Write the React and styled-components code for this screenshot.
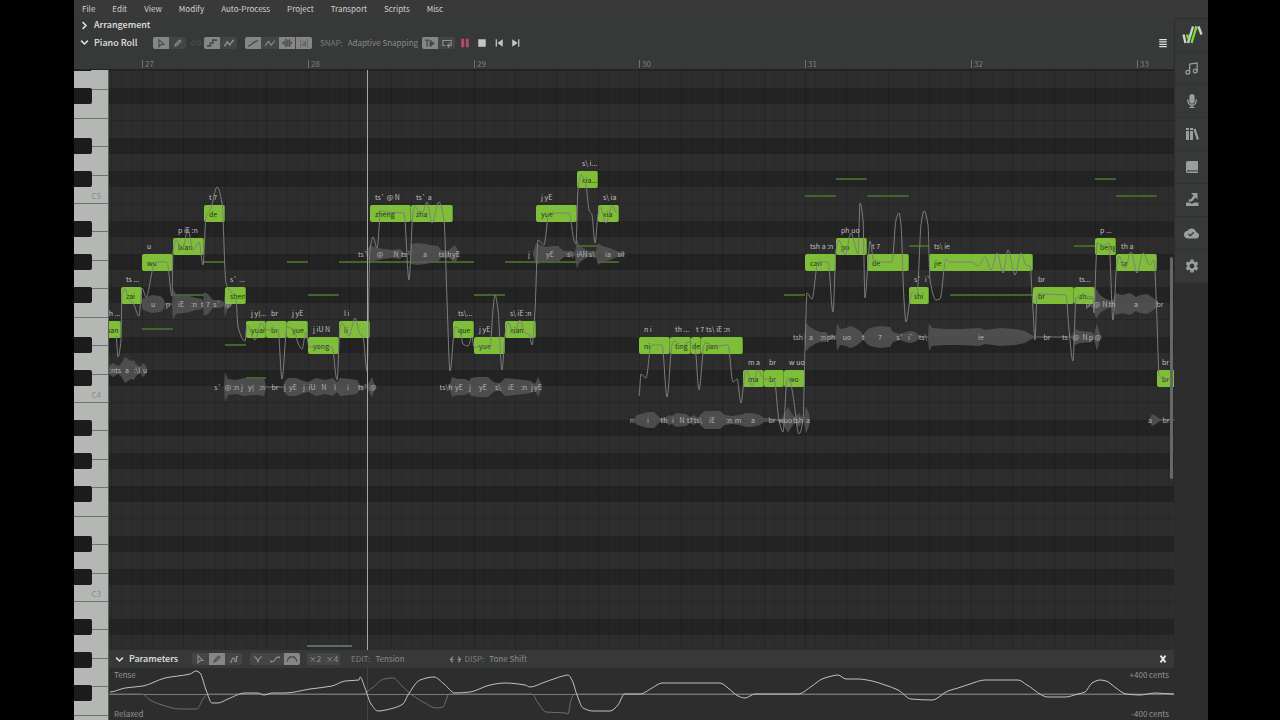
import React, { useState } from 'react';
import styled, { createGlobalStyle } from 'styled-components';
import { Music } from 'lucide-react';
import { FaMicrophone } from 'react-icons/fa';
import { MdSettings, MdCloudDone } from 'react-icons/md';

const GlobalStyle = createGlobalStyle`
* {
box-sizing: border-box;
}
body {
margin: 0;
background: #000;
color: #c4c6c4;
font-family: "Noto Sans CJK SC", "Noto Sans", sans-serif;
font-size: 8px;
line-height: 12px;
}
button, select {
margin: 0;
padding: 0;
border: 0;
background: none;
color: inherit;
font: inherit;
}
`;

// one sixteenth of a beat group on the time line, and one octave of keys
const STEP = 10.36;
const OCTAVE = 199;
const BAR_ONE = 33;
const MIDDLE_C = 333;

const timeX = (t) => Math.round(BAR_ONE + t * STEP);
const pitchY = (p) => Math.round(MIDDLE_C + 0.5 - ((p + 1) * OCTAVE) / 12);

const Page = styled.div`
height: 100vh;
min-height: 480px;
padding: 0 72px 0 74px;
display: flex;
`;

const Window = styled.div`
flex: 1;
min-width: 0;
display: flex;
flex-direction: column;
background: #2d2d2d;
overflow: hidden;
`;

const MenuBar = styled.nav`
height: 18px;
padding: 0 8px;
display: flex;
align-items: center;
gap: 17px;
background: #393939;
`;

const MenuItem = styled.button`
color: #d0d2d0;
`;

const Body = styled.div`
flex: 1;
min-height: 0;
display: flex;
`;

const Main = styled.main`
flex: 1;
min-width: 0;
display: flex;
flex-direction: column;
`;

const SectionBar = styled.div`
height: ${(p) => p.$height}px;
padding: 0 3px 0 6px;
display: flex;
align-items: center;
background: #373938;
`;

const SectionTitle = styled.button`
width: ${(p) => p.$width}px;
display: flex;
align-items: center;
gap: 5px;
color: #e0e2e0;
font-size: 9px;
font-weight: 500;
white-space: nowrap;
text-align: left;
`;

const Group = styled.div`
display: flex;
gap: 1px;
height: 12px;
margin-right: ${(p) => p.$after}px;
border-radius: 2px;
overflow: hidden;
background: #444645;
`;

const Tool = styled.button`
width: 16px;
height: 12px;
display: flex;
align-items: center;
justify-content: center;
background: ${(p) => (p.$on ? '#858786' : 'transparent')};
color: ${(p) => (p.$on ? '#464846' : '#8e908e')};
`;

const PlainTool = styled.button`
width: 17px;
height: 12px;
display: flex;
align-items: center;
justify-content: center;
color: ${(p) => p.$color || '#c4c6c4'};
`;

const Field = styled.label`
display: flex;
align-items: center;
gap: 5px;
color: #7c7e7c;
margin-right: ${(p) => p.$after}px;
`;

const Select = styled.select`
appearance: none;
width: 72px;
color: #8a8c8a;
`;

const Spacer = styled.div`
flex: 1;
`;

const Ruler = styled.div`
height: 17px;
padding: 7px 0 1px 68px;
display: flex;
overflow: hidden;
background: #373938;
border-bottom: 1px solid #222423;
`;

const Bar = styled.div`
flex: none;
padding-left: 2px;
border-left: 1px solid #6f716f;
color: #7c7e7c;
line-height: 8px;
`;

const Workspace = styled.div`
flex: 1;
min-height: 0;
display: flex;
`;

const Keys = styled.div`
flex: none;
width: 35px;
overflow: hidden;
border-right: 1px solid #5c5e5c;
`;

const Octave = styled.div`
position: relative;
height: ${OCTAVE}px;
display: flex;
flex-direction: column;

&:first-child {
margin-top: -65px;
}
`;

const WhiteKey = styled.div`
flex: 1;
padding: 0 7px 1px 0;
display: flex;
align-items: flex-end;
justify-content: flex-end;
background: #b5b7b5;
border-bottom: 1px solid #707270;
color: #8a8c8a;
`;

const BlackKey = styled.div`
position: absolute;
left: 0;
width: 18px;
height: 16px;
border-radius: 0 2px 2px 0;
background: #1c1c1c;
`;

const Editor = styled.div`
flex: 1;
min-width: 0;
display: flex;
flex-direction: column;
`;

const Roll = styled.section`
position: relative;
flex: 1;
min-height: 0;
overflow: hidden;
background-color: #2d2d2d;
background-image: linear-gradient(
#2d2d2d 0 17px, #232323 17px 33px,
#2d2d2d 33px 50px, #232323 50px 66px,
#2d2d2d 66px 83px, #232323 83px 99px,
#2d2d2d 99px 115px, #262626 115px 116px, #2d2d2d 116px 133px,
#232323 133px 149px, #2d2d2d 149px 166px,
#232323 166px 182px, #2d2d2d 182px 198px, #262626 198px 199px
);
background-size: 100% ${OCTAVE}px;
background-position: 0 -65px;
`;

const Layer = styled.svg`
position: absolute;
inset: 0;
width: 100%;
height: 100%;
pointer-events: none;
`;

const Note = styled.button`
position: absolute;
height: 17px;
padding-left: ${(p) => (p.$short ? 1 : 5)}px;
border-radius: 2px;
border-right: 1px solid #5f9a28;
background: #7fbe39;
color: #1c3808;
font-size: 7px;
text-align: left;
white-space: nowrap;
overflow: hidden;
`;

const Phoneme = styled.span`
position: absolute;
color: #c0c2c0;
font-size: 7px;
white-space: pre;
`;

const WaveText = styled.span`
position: absolute;
transform: translateX(-50%);
color: #b4b6b4;
font-size: 7px;
white-space: nowrap;
`;

const Alternate = styled.div`
position: absolute;
height: 2px;
background: #42662a;
`;

const Playhead = styled.div`
position: absolute;
top: 0;
bottom: 0;
left: 258px;
width: 1px;
background: ${(p) => (p.$dim ? '#424442' : '#a6a8a6')};
`;

const VerticalThumb = styled.div`
position: absolute;
right: 1px;
top: 187px;
width: 3px;
height: 222px;
border-radius: 2px;
background: #666866;
`;

const HorizontalThumb = styled.div`
position: absolute;
left: 198px;
bottom: 3px;
width: 45px;
height: 2px;
background: #5c6e5c;
`;

const Params = styled.section`
position: relative;
height: 52px;
padding: 1px 5px 0;
display: flex;
flex-direction: column;
justify-content: space-between;
overflow: hidden;
background: #2d2d2d;
`;

const ScaleRow = styled.div`
display: flex;
justify-content: space-between;
color: #929492;
`;

const Side = styled.aside`
flex: none;
width: 34px;
padding-top: 1px;
border-left: 1px solid #2b2d2c;
`;

const SideButton = styled.button`
width: 100%;
height: 33px;
display: flex;
align-items: center;
justify-content: center;
background: #373938;
border-bottom: 1px solid #313332;
color: #9c9e9c;
`;

const menus = ['File', 'Edit', 'View', 'Modify', 'Auto-Process', 'Project', 'Transport', 'Scripts', 'Misc'];

// lyric, start, length, semitones over C4, phonemes
const notes = [
  ['uan', -4, 2, 4, 'th ...'],
  ['zai', -2, 2, 6, 'ts ...'],
  ['wu', 0, 3, 8, 'u'],
  ['bian', 3, 3, 9, 'p iE :n'],
  ['de', 6, 2, 11, 't 7'],
  ['shen', 8, 2, 6, 's` ...'],
  ['yuan', 10, 2, 4, 'j y{...'],
  ['br', 12, 2, 4, 'br'],
  ['yue', 14, 2, 4, 'j yE'],
  ['yong', 16, 3, 3, 'j iU N'],
  ['li', 19, 3, 4, 'l i'],
  ['zheng', 22, 4, 11, 'ts` @ N'],
  ['zha', 26, 4, 11, 'ts` a'],
  ['que', 30, 2, 4, 'ts\\...'],
  ['yue', 32, 3, 3, 'j yE'],
  ['xian', 35, 3, 4, 's\\ iE :n'],
  ['yue', 38, 4, 11, 'j yE'],
  ['xia...', 42, 2, 13, 's\\ i...'],
  ['xia', 44, 2, 11, 's\\ ia'],
  ['ni', 48, 3, 3, 'n i'],
  ['ting', 51, 2, 3, 'th ...'],
  ['de', 53, 1, 3, 't 7'],
  ['jian', 54, 4, 3, 'ts\\ iE :n'],
  ['ma', 58, 2, 1, 'm a'],
  ['br', 60, 2, 1, 'br'],
  ['wo', 62, 2, 1, 'w uo'],
  ['can', 64, 3, 8, 'tsh a :n'],
  ['po', 67, 3, 9, 'ph uo'],
  ['de', 70, 4, 8, 't 7'],
  ['shi', 74, 2, 6, 's`  i`'],
  ['jie', 76, 10, 8, 'ts\\ ie'],
  ['br', 86, 4, 6, 'br'],
  ['zh...', 90, 2, 6, 'ts...'],
  ['beng', 92, 2, 9, 'p ...'],
  ['ta', 94, 4, 8, 'th a'],
  ['br', 98, 4, 1, 'br'],
];

// start, length, semitones over C4
const alternates = [
  [0, 3, 4], [3, 3, 6], [6, 2, 8], [8, 2, 3], [10, 2, 1], [14, 2, 8],
  [16, 3, 6], [19, 3, 8], [22, 10, 8], [32, 3, 6], [35, 7, 8], [42, 2, 9],
  [44, 2, 8], [62, 2, 6], [64, 3, 12], [67, 3, 13], [70, 4, 12], [74, 2, 9],
  [78, 8, 6], [90, 2, 9], [92, 2, 13], [94, 4, 12],
];

// y, envelope as x and half height, phonemes as centre x and text
const waves = [
  {
    y: 304,
    env: [142, 5, 146, 7, 152, 9, 160, 8, 163, 6, 165, 1, 172, 1, 173, 16, 176, 10, 184, 9, 190, 8, 196, 6, 202, 5, 203, 2, 204, 12, 208, 10, 213, 4, 220, 4, 224, 2, 225, 14, 227, 6, 232, 1],
    text: [153, 'u', 168, 'p', 181, 'iE', 194, ':n', 202, 't', 208, '7', 217, 's`', 228, '@'],
  },
  {
    y: 370,
    env: [109, 4, 113, 7, 118, 4, 120, 5, 122, 8, 125, 13, 131, 9, 134, 10, 136, 6, 140, 3, 143, 7, 146, 4, 147, 0],
    text: [115, ':nts', 127, 'a', 137, ':\\l', 145, 'u'],
  },
  {
    y: 387,
    env: [224, 1, 225, 15, 228, 8, 236, 7, 240, 8, 244, 9, 252, 8, 258, 8, 264, 9, 266, 1, 283, 1, 285, 6, 288, 9, 296, 9, 304, 6, 308, 5, 316, 9, 325, 7, 333, 9, 337, 5, 340, 9, 350, 8, 357, 7, 360, 2, 366, 1, 368, 3, 372, 10, 374, 4, 376, 1],
    text: [218, 's`', 228, '@', 236, ':n', 242, 'j', 251, 'y{', 262, ':n', 275, 'br', 285, 'j', 293, 'yE', 304, 'j', 312, 'iU', 324, 'N', 335, 'l', 348, 'i', 363, 'ts`', 373, '@'],
  },
  {
    y: 254,
    env: [366, 2, 370, 9, 374, 7, 384, 5, 392, 4, 400, 5, 402, 3, 404, 1, 410, 1, 411, 10, 417, 11, 426, 10, 430, 9, 438, 8, 441, 4, 448, 3, 450, 5, 455, 9, 457, 5, 460, 0],
    text: [363, 'ts`', 380, '@', 396, 'N', 406, 'ts`', 425, 'a', 445, 'ts\\h', 456, 'yE'],
  },
  {
    y: 387,
    env: [448, 1, 450, 3, 452, 10, 458, 8, 465, 8, 469, 6, 471, 9, 478, 10, 488, 10, 492, 6, 496, 4, 500, 4, 504, 8, 505, 9, 514, 8, 524, 7, 531, 6, 535, 3, 538, 10, 540, 6, 542, 1],
    text: [446, 'ts\\h', 459, 'yE', 470, 'j', 483, 'yE', 498, 's\\', 511, 'iE', 524, ':n', 532, 'j', 538, 'yE'],
  },
  {
    y: 254,
    env: [533, 1, 536, 11, 540, 9, 546, 7, 553, 8, 558, 8, 564, 3, 570, 3, 575, 2, 577, 15, 579, 9, 583, 6, 588, 3, 596, 3, 598, 11, 602, 8, 610, 6, 617, 3, 625, 1],
    text: [529, 'j', 550, 'yE', 570, 's\\', 582, 'iAN', 592, 's\\', 608, 'ia', 621, 'sil'],
  },
  {
    y: 420,
    env: [634, 1, 637, 5, 641, 6, 648, 8, 654, 8, 660, 2, 666, 3, 669, 5, 672, 4, 676, 7, 686, 6, 690, 3, 694, 5, 698, 2, 701, 6, 705, 9, 712, 9, 720, 9, 725, 5, 732, 4, 740, 5, 746, 7, 752, 7, 760, 5, 764, 2, 781, 1, 784, 6, 788, 13, 792, 6, 795, 3, 799, 7, 801, 4, 804, 2, 806, 14, 809, 6, 810, 0],
    text: [632, 'n', 648, 'i', 664, 'th', 673, 'i', 682, 'N', 690, 't7', 698, 'ts\\', 712, 'iE', 729, ':n', 738, 'm', 753, 'a', 772, 'br', 781, 'w', 788, 'uo', 798, 'tsh', 808, 'a'],
  },
  {
    y: 337,
    env: [804, 1, 806, 14, 810, 10, 815, 7, 820, 5, 826, 5, 828, 2, 836, 2, 837, 14, 840, 8, 846, 9, 850, 11, 856, 9, 861, 5, 863, 2, 867, 7, 870, 9, 880, 11, 890, 10, 893, 5, 900, 3, 906, 5, 910, 6, 915, 5, 920, 1, 928, 1, 929, 14, 932, 9, 945, 8, 960, 8, 980, 9, 985, 7, 1000, 9, 1015, 8, 1025, 6, 1030, 3, 1034, 1, 1072, 1, 1075, 8, 1080, 6, 1092, 5, 1094, 2, 1097, 14, 1099, 6, 1101, 0],
    text: [798, 'tsh', 811, 'a', 823, ':n', 831, 'ph', 847, 'uo', 863, 't', 880, '7', 900, 's`', 911, 'i`', 923, 'ts\\', 981, 'ie', 1047, 'br', 1067, 'ts`', 1076, '@', 1085, 'N', 1091, 'p', 1098, '@'],
  },
  {
    y: 304,
    env: [1088, 1, 1093, 4, 1096, 15, 1100, 9, 1106, 5, 1112, 3, 1116, 11, 1122, 9, 1130, 11, 1136, 7, 1140, 9, 1147, 10, 1152, 7, 1157, 3, 1158, 1],
    text: [1088, 'p', 1097, '@', 1105, 'N', 1112, 'th', 1136, 'a', 1160, 'br'],
  },
  {
    y: 420,
    env: [1150, 2, 1152, 6, 1156, 4, 1160, 1, 1174, 1],
    text: [1150, 'a', 1166, 'br'],
  },
];

const pitchCurves = [
  [116, 336, 118, 357, 121, 340, 122, 293, 125, 289, 129, 300, 133, 303, 139, 316, 142, 288, 146, 297, 154, 265, 157, 262, 167, 262, 172, 296, 173, 252, 176, 240, 182, 250, 188, 230, 193, 250, 199, 242, 203, 265, 206, 217, 211, 208, 217, 187, 222, 203, 226, 283, 231, 292, 236, 300, 238, 327, 245, 341, 247, 325, 255, 340, 261, 323, 266, 330, 278, 330, 282, 379, 287, 327, 294, 330, 298, 343, 302, 349, 306, 332, 309, 347, 332, 347, 337, 380, 340, 327, 342, 323, 349, 336, 355, 318, 360, 334, 363, 337, 367, 371, 370, 250, 373, 237, 377, 248, 381, 210, 384, 212, 404, 213, 409, 280, 413, 212, 415, 206, 421, 217, 427, 202, 432, 223, 439, 202, 444, 220, 447, 300, 450, 371, 455, 327, 460, 330, 463, 344, 468, 346, 472, 337, 474, 347, 490, 347, 493, 310, 495, 295, 498, 310, 502, 370, 505, 335, 508, 322, 514, 334, 520, 320, 525, 333, 529, 334, 532, 345, 535, 310, 538, 240, 544, 245, 549, 213, 569, 213, 574, 240, 576, 244, 578, 190, 581, 175, 586, 185, 589, 210, 592, 215, 595, 243, 598, 215, 600, 207, 606, 223, 612, 206, 617, 213],
  [639, 396, 641, 374, 646, 378, 651, 346, 653, 345, 662, 345, 667, 397, 672, 345, 674, 341, 681, 347, 689, 342, 695, 348, 699, 390, 704, 345, 706, 342, 712, 347, 728, 345, 733, 382, 737, 379, 741, 403, 745, 374, 747, 371, 752, 386, 758, 370, 764, 379, 774, 379, 779, 420, 783, 432, 787, 380, 789, 378, 793, 395, 799, 434, 803, 420, 805, 350, 807, 293, 812, 299, 818, 262, 828, 262, 833, 312, 836, 250, 839, 240, 845, 255, 851, 233, 858, 254, 860, 203, 863, 220, 865, 298, 868, 262, 870, 241, 874, 262, 892, 262, 896, 220, 899, 213, 901, 225, 904, 300, 906, 322, 910, 300, 912, 292, 917, 296, 921, 225, 924, 211, 928, 225, 930, 280, 936, 300, 940, 299, 946, 259, 950, 262, 972, 262, 978, 266, 985, 257, 991, 270, 997, 253, 1003, 273, 1008, 250, 1015, 275, 1021, 253, 1026, 265, 1030, 266, 1033, 310, 1035, 340, 1037, 296, 1040, 294, 1066, 295, 1069, 330, 1073, 361, 1076, 298, 1083, 296, 1093, 297, 1094, 313, 1096, 262, 1097, 243, 1102, 246, 1109, 243, 1113, 320, 1117, 262, 1119, 256, 1125, 268, 1131, 252, 1137, 273, 1143, 253, 1150, 265, 1154, 260, 1157, 320, 1159, 375, 1163, 379, 1174, 379],
];

const tension = [110, 692, 125, 688, 143, 686, 165, 678, 190, 674, 196, 671, 200, 673, 206, 690, 212, 703, 218, 703, 228, 699, 245, 693, 258, 693, 264, 695, 272, 693, 285, 693, 310, 689, 332, 686, 345, 681, 359, 680, 360, 677, 365, 688, 371, 704, 378, 711, 390, 709, 403, 704, 408, 695, 420, 680, 434, 677, 444, 684, 455, 693, 470, 692, 490, 685, 505, 683, 525, 685, 530, 687, 545, 682, 563, 676, 568, 675, 572, 680, 577, 695, 583, 708, 593, 711, 610, 711, 618, 705, 622, 697, 624, 694, 640, 694, 652, 688, 662, 683, 720, 683, 728, 688, 738, 696, 745, 698, 755, 694, 798, 694, 812, 686, 822, 679, 832, 676, 838, 675, 846, 679, 858, 679, 872, 681, 885, 685, 898, 690, 911, 699, 932, 700, 948, 691, 958, 688, 970, 684, 985, 680, 1018, 680, 1027, 685, 1048, 697, 1065, 697, 1078, 694, 1085, 692, 1092, 683, 1100, 680, 1106, 681, 1116, 688, 1126, 694, 1140, 695, 1155, 693, 1174, 694];
const toneShift = [110, 694, 142, 694, 150, 700, 162, 705, 180, 709, 197, 709, 203, 699, 208, 694, 362, 694, 372, 688, 384, 679, 393, 678, 402, 686, 412, 695, 425, 703, 436, 708, 443, 707, 449, 694, 532, 694, 538, 703, 546, 712, 566, 713, 568, 714, 571, 700, 575, 694, 1174, 694];

const pairs = (flat) => {
  const out = [];
  for (let i = 0; i < flat.length; i += 2) out.push([flat[i], flat[i + 1]]);
  return out;
};

// cubic through all the points, flat at the peaks
const smooth = (flat) => {
  const pts = pairs(flat);
  const slope = pts.map((p, i) => {
    const a = pts[i - 1];
    const b = pts[i + 1];
    if (!a || !b) return 0;
    const left = (p[1] - a[1]) / (p[0] - a[0]);
    const right = (b[1] - p[1]) / (b[0] - p[0]);
    return left * right <= 0 ? 0 : (2 * left * right) / (left + right);
  });
  let d = `M${pts[0]}`;
  for (let i = 1; i < pts.length; i++) {
    const [x0, y0] = pts[i - 1];
    const [x1, y1] = pts[i];
    const h = (x1 - x0) / 3;
    d += `C${x0 + h},${y0 + slope[i - 1] * h} ${x1 - h},${y1 - slope[i] * h} ${x1},${y1}`;
  }
  return d;
};

const envelope = ({ y, env }) => {
  const pts = pairs(env);
  const top = pts.map(([x, h]) => `${x},${y - h}`);
  const bottom = pts.map(([x, h]) => `${x},${y + h}`).reverse();
  return top.concat(bottom).join(' ');
};

const drawings = {
  right: <path d="M3.5 1.5 8 6l-4.5 4.5" strokeWidth="2" />,
  down: <path d="M1.5 3.5 6 8l4.5-4.5" strokeWidth="2" />,
  cursor: <path d="M3.5 2v8.5l2-2.5 4-.5z" strokeWidth="1.3" />,
  pencil: <path d="M2.5 9.500 3 7.500l5-5 1.500 1.500-5 5z" strokeWidth="1.3" />,
  link: <path d="M5 3.500H3a2.500 2.500 0 0 0 0 5h2M7 3.500h2a2.500 2.500 0 0 1 0 5H7M4 6h4" />,
  stair: <path d="M0 9.500h4V6h3V2.500h5" strokeWidth="2" />,
  dots: <g><path d="M1 9 4 5l3 3 4-5" strokeWidth="1.5" /><path d="M0 8h2v2H0zM3 4h2v2H3zM6 7h2v2H6zM10 2h2v2h-2z" fill="currentColor" stroke="none" /></g>,
  curve: <path d="M0 9.500C5 9.500 4 6.500 6.500 5.500S9 3.500 12 3" strokeWidth="1.5" />,
  zigzag: <path d="M0 9.500 4 4l3.500 4.500L12 3" strokeWidth="1.3" />,
  wave: <path d="M.5 5v2M2.700 3.500v5M4.900 1v10M7.100 2v8M9.300 1.500v9M11.500 4.500v3" strokeWidth="1.5" />,
  follow: <g><path d="M0 2.500h5M2.500 2.500v8" strokeWidth="1.5" /><path d="M6 2.500v8l5-4z" fill="currentColor" /></g>,
  loop: <path d="M4 9H1V3h10v6H7M9 6.500 6.500 9 9 11.500" strokeWidth="1.3" />,
  pause: <path d="M1.500 1h3.500v10H1.500zM7 1h3.500v10H7z" fill="currentColor" stroke="none" />,
  stop: <path d="M1.500 1.500h9v9h-9z" fill="currentColor" stroke="none" />,
  prev: <path d="M2 1.500h1.500v9H2zM10.500 1.500v9L4 6z" fill="currentColor" stroke="none" />,
  next: <path d="M8.500 1.500H10v9H8.500zM1.500 1.500v9L8 6z" fill="currentColor" stroke="none" />,
  list: <path d="M1.500 1.800h9M1.500 4.700h9M1.500 7.500h9M1.500 10.300h9" strokeWidth="1.5" />,
  steps: <path d="M1 9.500h2L4 5h3v4h2V3h2" strokeWidth="1.3" />,
  vee: <g><path d="M1 3c3 1 4 3 5 5 1-2 2-4 5-5" strokeWidth="1.3" /><path d="M5 8h2v2H5z" fill="currentColor" stroke="none" /></g>,
  slope: <g><path d="M1 9h3l4-5h3" strokeWidth="1.3" /><path d="M0 8h2v2H0zM10 3h2v2h-2z" fill="currentColor" stroke="none" /></g>,
  arch: <path d="M0 9.500C1 5 3 3.500 6 3.500s5 1.500 6 6M3.500 2.500v2.500M8.500 2.500v2.500" strokeWidth="1.5" />,
  swap: <path d="M0 6h4M8 6h4M3 3 .5 6 3 9M9 3l2.500 3L9 9" strokeWidth="1.3" />,
  close: <path d="M3 2l6 8M9 2 3 10" strokeWidth="2.2" />,
};

const Icon = ({ name, size = 10 }) => (
  <svg width={size} height={size} viewBox="0 0 12 12" fill="none" stroke="currentColor" aria-hidden="true">
    {drawings[name]}
  </svg>
);

const Logo = () => (
  <svg width="22" height="20" viewBox="0 0 22 20" fill="none" strokeWidth="2.4" aria-hidden="true">
    <path d="M2.500 9.500 4.500 18M7 18 12 1.500M17.500 1.500 20.500 9.500M15 1.500v3" stroke="#cfd1cf" />
    <path d="M6 9.500l1.500 4.500M10.500 18 15.500 1.500" stroke="#6fe02b" />
  </svg>
);

const Books = () => (
  <svg width="14" height="14" viewBox="0 0 14 14" fill="currentColor" aria-hidden="true">
    <path d="M1 1h3v2H1zM1 4h3v9H1zM5 1h3v2H5zM5 4h3v9H5zM8.500 2.500l2-1 3.500 10.500-2.200 1z" />
  </svg>
);

const Notebook = () => (
  <svg width="14" height="14" viewBox="0 0 14 14" fill="currentColor" aria-hidden="true">
    <path d="M3 1h10v9H2.500v2H13v1H2.500A1.500 1.500 0 0 1 1 11.500V3a2 2 0 0 1 2-2z" />
    <path d="M3.500 10.600H13v1H3.500z" />
  </svg>
);

const Export = () => (
  <svg width="14" height="14" viewBox="0 0 14 14" fill="currentColor" aria-hidden="true">
    <path d="M1 9.500h4l2 1.500 2-1.500h4.500V13H1zM6 0h6.500v6.500L10.500 4.500 7 8.500H4l-1-2h2.500L8.500 2.500z" />
  </svg>
);

const sideItems = [
  ['Home', <Logo />],
  ['Notes', <Music size={15} />],
  ['Voice', <FaMicrophone size={14} />],
  ['Library', <Books />],
  ['Dictionary', <Notebook />],
  ['Export', <Export />],
  ['Cloud', <MdCloudDone size={15} />],
  ['Settings', <MdSettings size={16} />],
];

const blackKeys = [1, 3, 5, 8, 10];

const ToolGroup = ({ items, initial, after }) => {
  const [active, setActive] = useState(initial);
  const toggle = (name) =>
    setActive(active.includes(name) ? active.filter((n) => n !== name) : [...active, name]);

  return (
    <Group $after={after}>
      {items.map((name) => (
        <Tool key={name} aria-label={name} $on={active.includes(name)} onClick={() => toggle(name)}>
          {drawings[name] ? <Icon name={name} /> : name}
        </Tool>
      ))}
    </Group>
  );
};

const PianoKeys = () => (
  <Keys>
    {[5, 4, 3, 2].map((octave) => (
      <Octave key={octave}>
        {['B', 'A', 'G', 'F', 'E', 'D', 'C'].map((key) => (
          <WhiteKey key={key}>{key === 'C' && octave > 2 ? `C${octave}` : ''}</WhiteKey>
        ))}
        {blackKeys.map((row) => (
          <BlackKey key={row} style={{ top: Math.round((row * OCTAVE) / 12) }} />
        ))}
      </Octave>
    ))}
  </Keys>
);

const PianoRoll = () => {
  const lines = [];
  for (let t = -3; t < 280; t++) lines.push(t);

  return (
    <Roll aria-label="Piano Roll">
      <Layer>
        {lines.map((t) => (
          <rect key={t} x={timeX(t)} y="0" width="1" height="100%" fill="#000" opacity={t % 4 === 0 ? 0.2 : 0.08} />
        ))}
      </Layer>
      {alternates.map(([start, length, pitch]) => (
        <Alternate
          key={start}
          style={{ left: timeX(start), top: pitchY(pitch) + 7, width: timeX(start + length) - timeX(start) }}
        />
      ))}
      <Layer>
        <g transform="translate(-109 -70)">
          {waves.map((wave) => (
            <polygon key={wave.env[0]} points={envelope(wave)} fill="#565656" opacity="0.8" />
          ))}
        </g>
      </Layer>
      {notes.map(([lyric, start, length, pitch]) => (
        <Note
          key={start}
          $short={length === 1}
          style={{ left: timeX(start), top: pitchY(pitch), width: timeX(start + length) - timeX(start) }}
        >
          {lyric}
        </Note>
      ))}
      <Layer>
        <g transform="translate(-109 -70)" fill="none" stroke="#7c7e7c">
          {pitchCurves.map((curve) => (
            <path key={curve[0]} d={smooth(curve)} />
          ))}
        </g>
      </Layer>
      {notes.map(([, start, , pitch, phoneme]) => (
        <Phoneme key={start} style={{ left: timeX(start) + 5, top: pitchY(pitch) - 14 }}>
          {phoneme}
        </Phoneme>
      ))}
      {waves.map((wave) =>
        pairs(wave.text).map(([x, text]) => (
          <WaveText key={x + text} style={{ left: x - 109, top: wave.y - 76 }}>
            {text}
          </WaveText>
        ))
      )}
      <Playhead />
      <VerticalThumb />
      <HorizontalThumb />
    </Roll>
  );
};

const Parameters = () => (
  <>
    <SectionBar $height={18}>
      <SectionTitle $width={77}>
        <Icon name="down" size={9} />
        Parameters
      </SectionTitle>
      <ToolGroup items={['cursor', 'pencil', 'steps']} initial={['pencil']} after={8} />
      <ToolGroup items={['vee', 'slope', 'arch']} initial={['arch']} after={7} />
      <ToolGroup items={['×2', '×4']} initial={[]} after={11} />
      <Field $after={0}>
        EDIT:
        <Select>
          <option>Tension</option>
        </Select>
      </Field>
      <PlainTool aria-label="swap" $color="#8a8c8a">
        <Icon name="swap" size={11} />
      </PlainTool>
      <Field $after={0}>
        DISP:
        <Select>
          <option>Tone Shift</option>
        </Select>
      </Field>
      <Spacer />
      <PlainTool aria-label="close" $color="#e8eae8">
        <Icon name="close" />
      </PlainTool>
    </SectionBar>
    <Params aria-label="Parameters">
      <Playhead $dim />
      <Layer>
        <g transform="translate(-109 -668)" fill="none">
          <path d="M109 694.5H4000" stroke="#7a7c7a" />
          <path d={smooth(toneShift)} stroke="#6c6e6c" />
          <path d={smooth(tension)} stroke="#c0c2c0" />
        </g>
      </Layer>
      <ScaleRow>
        <span>Tense</span>
        <span>+400 cents</span>
      </ScaleRow>
      <ScaleRow>
        <span>Relaxed</span>
        <span>-400 cents</span>
      </ScaleRow>
    </Params>
  </>
);

const App = () => {
  return (
    <>
      <GlobalStyle />
      <Page>
        <Window>
          <MenuBar>
            {menus.map((name) => (
              <MenuItem key={name}>{name}</MenuItem>
            ))}
          </MenuBar>
          <Body>
            <Main>
              <SectionBar $height={14}>
                <SectionTitle $width={80}>
                  <Icon name="right" size={9} />
                  Arrangement
                </SectionTitle>
              </SectionBar>
              <SectionBar $height={21}>
                <SectionTitle $width={73}>
                  <Icon name="down" size={9} />
                  Piano Roll
                </SectionTitle>
                <ToolGroup items={['cursor', 'pencil']} initial={['cursor']} after={1} />
                <PlainTool aria-label="link" $color="#555755">
                  <Icon name="link" />
                </PlainTool>
                <ToolGroup items={['stair', 'dots']} initial={['stair']} after={8} />
                <ToolGroup items={['curve', 'zigzag', 'wave', '|a|']} initial={['curve', 'wave', '|a|']} after={8} />
                <Field $after={2}>
                  SNAP:
                  <Select>
                    <option>Adaptive Snapping</option>
                  </Select>
                </Field>
                <ToolGroup items={['follow', 'loop']} initial={['follow']} after={2} />
                <PlainTool aria-label="pause" $color="#b8486a">
                  <Icon name="pause" />
                </PlainTool>
                <PlainTool aria-label="stop">
                  <Icon name="stop" />
                </PlainTool>
                <PlainTool aria-label="previous">
                  <Icon name="prev" />
                </PlainTool>
                <PlainTool aria-label="next">
                  <Icon name="next" />
                </PlainTool>
                <Spacer />
                <PlainTool aria-label="list" $color="#e0e2e0">
                  <Icon name="list" />
                </PlainTool>
              </SectionBar>
              <Ruler>
                {[27, 28, 29, 30, 31, 32, 33].map((bar, i) => (
                  <Bar key={bar} style={{ width: timeX(i * 16 + 16) - timeX(i * 16) }}>
                    {bar}
                  </Bar>
                ))}
              </Ruler>
              <Workspace>
                <PianoKeys />
                <Editor>
                  <PianoRoll />
                  <Parameters />
                </Editor>
              </Workspace>
            </Main>
            <Side>
              {sideItems.map(([label, icon]) => (
                <SideButton key={label} aria-label={label}>
                  {icon}
                </SideButton>
              ))}
            </Side>
          </Body>
        </Window>
      </Page>
    </>
  );
};

export default App;
